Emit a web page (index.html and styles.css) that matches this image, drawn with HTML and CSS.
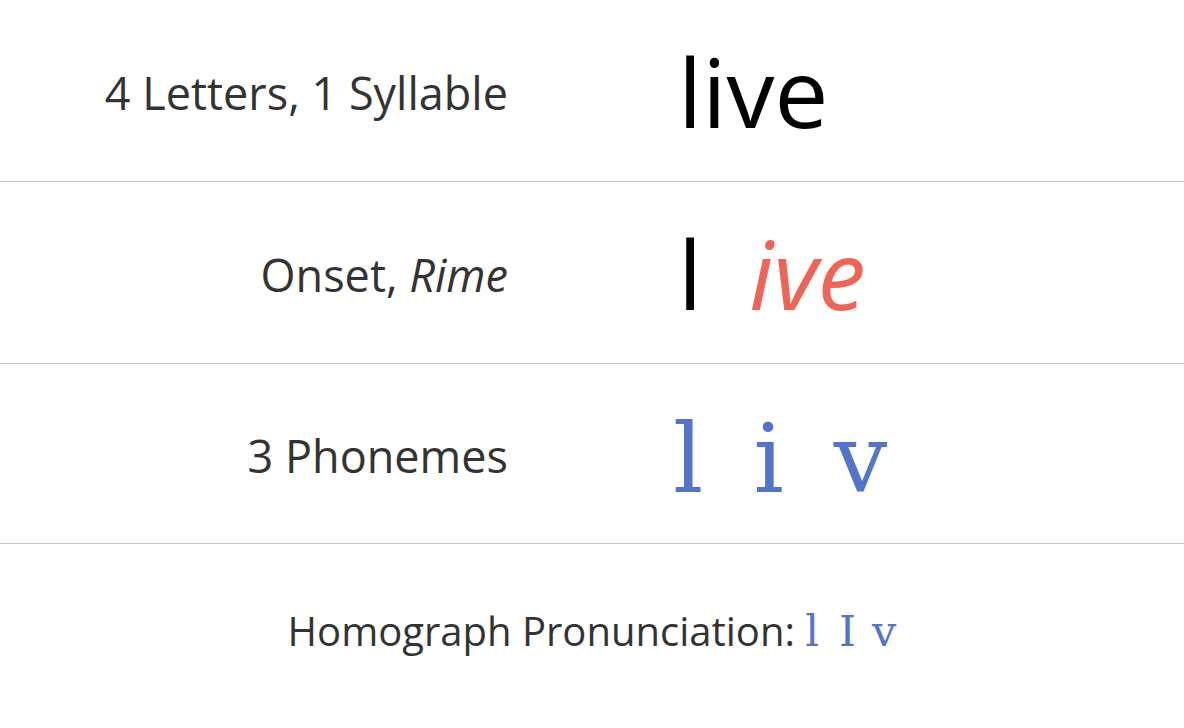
FILE: index.html
```html
<!DOCTYPE html>
<html>
<head>
<meta charset="utf-8">
<link rel="stylesheet" href="styles.css">
</head>
<body>
<div class="page">
  <div class="row">
    <div class="label">4 Letters, 1 Syllable</div>
    <div class="value word">live</div>
  </div>
  <div class="row">
    <div class="label">Onset, <em>Rime</em></div>
    <div class="value split"><span class="onset">l</span><span class="rime">ive</span></div>
  </div>
  <div class="row short">
    <div class="label">3 Phonemes</div>
    <div class="value phonemes"><span>l</span><span>i</span><span>v</span></div>
  </div>
  <div class="row last">
    <div class="homograph">Homograph Pronunciation: <span class="ipa"><span class="p1">l</span><span class="p2">I</span><span class="p3">v</span></span></div>
  </div>
</div>
</body>
</html>
```

FILE: styles.css
```css
html, body {
  margin: 0;
  padding: 0;
  background: #fff;
}
.page {
  width: 1184px;
  font-family: "Open Sans", sans-serif;
  color: #333;
}
.row {
  display: grid;
  grid-template-columns: 1fr 1fr;
  height: 181px;
  border-bottom: 1px solid #c8c8c8;
  align-items: center;
}
.row.short {
  height: 179px;
}
.row.last {
  display: flex;
  justify-content: center;
  border-bottom: none;
  height: 184px;
  align-items: flex-start;
}
.label {
  text-align: right;
  padding-right: 84px;
  padding-top: 4px;
  font-size: 45px;
}
.label em {
  font-style: italic;
}
.value {
  padding-left: 86px;
  display: flex;
  align-items: baseline;
}
.word {
  font-size: 96px;
  color: #000;
}
.split .onset {
  font-size: 96px;
  color: #000;
}
.split .rime {
  font-size: 96px;
  font-style: italic;
  color: #f06458;
  margin-left: 47px;
}
.phonemes {
  font-family: "DejaVu Serif", serif;
  font-size: 95px;
  color: #5474cc;
  gap: 50px;
  margin-left: -5px;
  padding-top: 10px;
}
.homograph {
  margin-top: 59px;
  font-size: 40px;
}
.ipa {
  font-family: "DejaVu Serif", serif;
  color: #5474cc;
  font-size: 43px;
}
.ipa .p2 {
  margin-left: 20px;
}
.ipa .p3 {
  margin-left: 16px;
}
```
